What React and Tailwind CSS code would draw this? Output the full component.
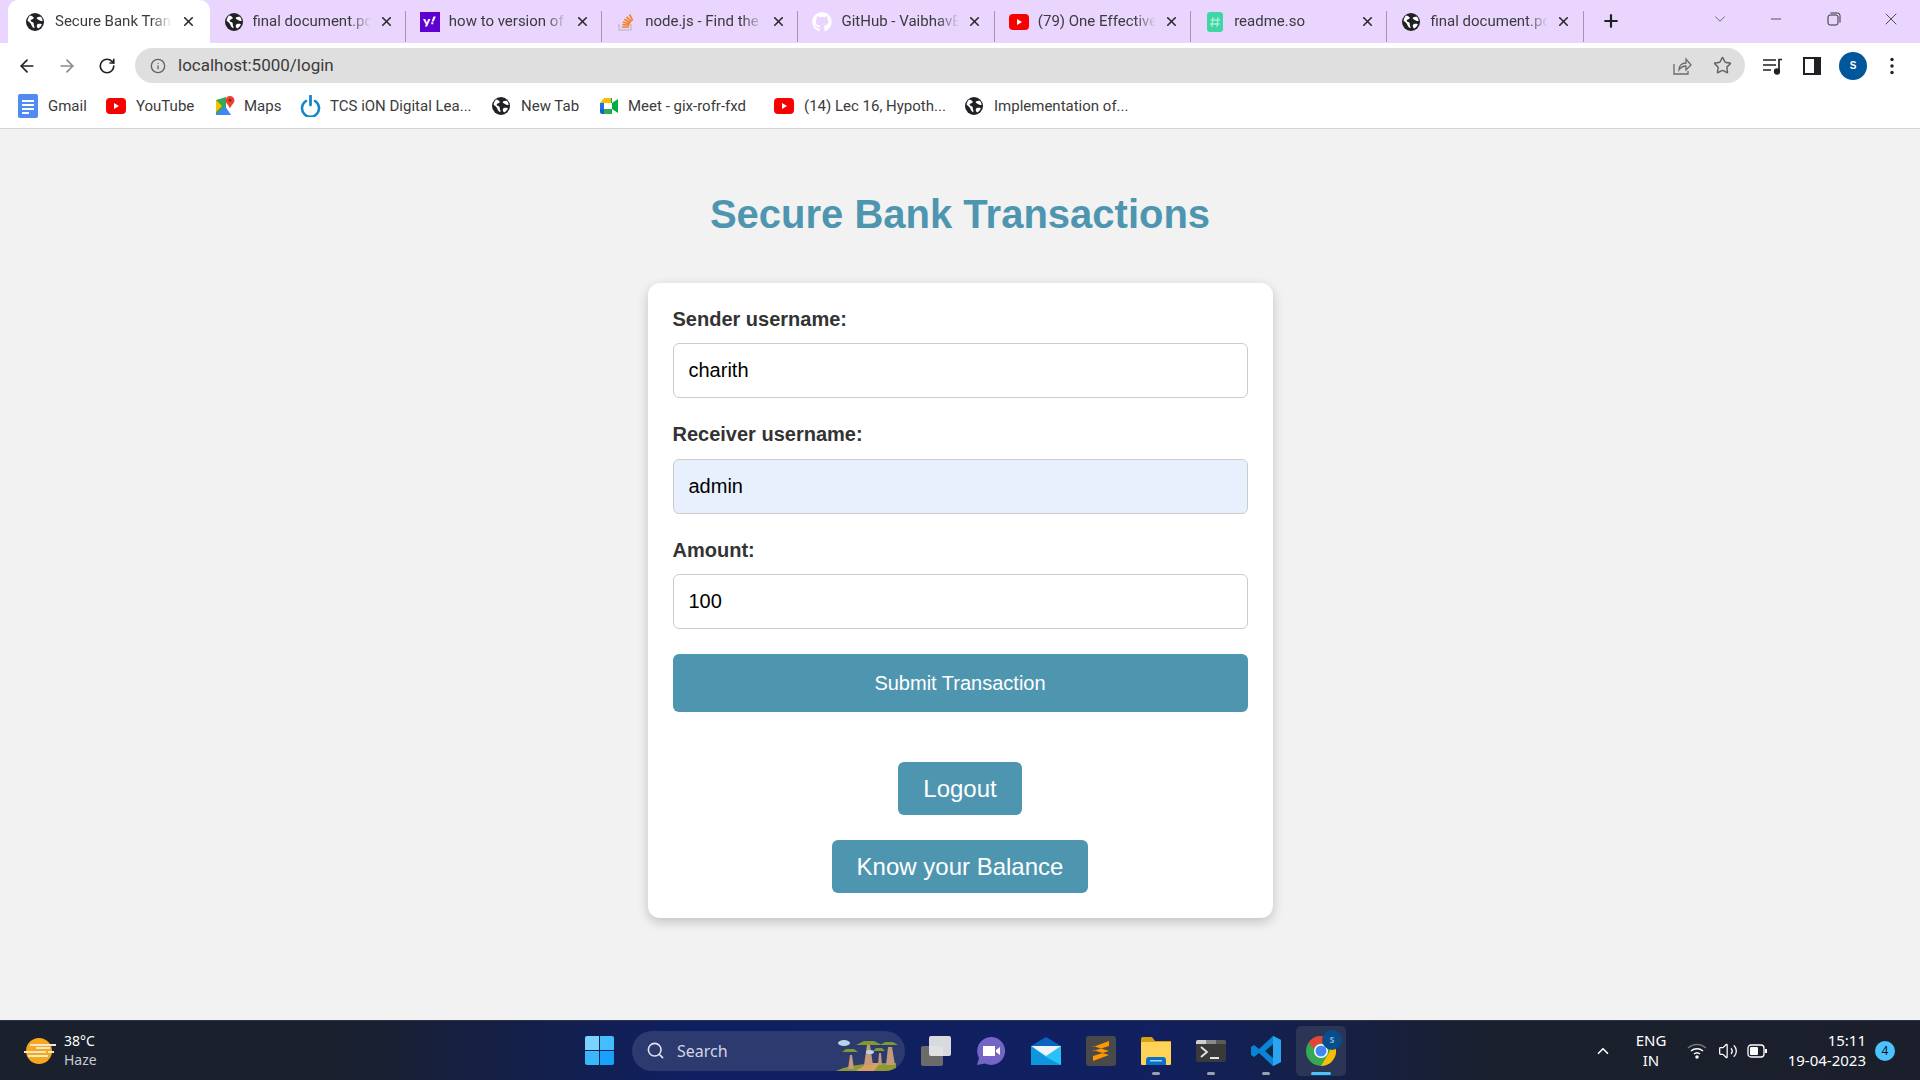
import { ArrowLeft, ArrowRight, RotateCw, Info, Star, X, Plus, ChevronDown, ChevronUp, Minus, Search, Volume2 } from "lucide-react";
import { FaGithub } from "react-icons/fa";

const Globe = ({ size = 18 }) => (
  <svg width={size} height={size} viewBox="0 0 18 18" className="shrink-0">
    <circle cx="9" cy="9" r="9" fill="#202124" />
    <path d="M4 2.6c1.6.3 3 .9 3.6 2 .5 1-.6 1.7-1.7 1.8-1.2.1-1.5 1-1 1.9.5.8 1.8.7 2.5 1.5.6.7.2 1.6.5 2.4.3.9 1 2 .3 3-1.600-.7-2.700-2.400-3.200-4.100C4.500 9.900 2.700 9 1.500 7.600 2 5.500 2.800 3.800 4 2.600z" fill="#fff" />
    <path d="M11 4.500c1.100-.8 2.500-1 3.900-.7 1 1.100 1.600 2.500 1.800 3.900-1.300.5-2.400.3-3.400-.4-.9-.6-1.700-.9-2.400-1.500-.3-.5-.2-1.100.1-1.300zM12 11c1.300-.3 2.600-.2 3.900.2-.6 1.800-2 3.400-3.800 4.300-1-.8-1.500-1.900-1.300-3 .1-.7.500-1.300 1.200-1.500z" fill="#fff" />
  </svg>
);

const YouTube = ({ w = 20, h = 16 }) => (
  <svg width={w} height={h} viewBox="0 0 20 16" className="shrink-0">
    <rect width="20" height="16" rx="4" fill="#f70000" />
    <path d="M8 5l5 3-5 3z" fill="#fff" />
  </svg>
);

const Yahoo = () => (
  <svg width="20" height="20" viewBox="0 0 20 20" className="shrink-0">
    <rect width="20" height="20" fill="#5f01d1" />
    <path d="M3 7h2.200l1.500 3.600L8.300 7h2.100l-3.300 7.500H4.900l.9-2.100zM13.500 4.500h2.300l-2 5h-2.200zM11.300 10.300h2v2h-2z" fill="#fff" />
  </svg>
);

const StackOverflow = () => (
  <svg width="18" height="20" viewBox="0 0 18 20" className="shrink-0">
    <path d="M2 12v6h12v-6" fill="none" stroke="#c7c0cf" strokeWidth="1.600" />
    <path d="M5 15h7M5.300 12.500l7 .8M6 10l6.800 2M7.300 7.300l6.200 3.400M9.500 4.800l5 4.800M12.500 2.500l3.200 6" stroke="#f58025" strokeWidth="1.600" fill="none" />
  </svg>
);

const ReadmeSo = () => (
  <svg width="16" height="20" viewBox="0 0 16 20" className="shrink-0">
    <rect width="16" height="20" rx="3" fill="#3fd6a3" />
    <path d="M6 5l-1 10M11 5l-1 10M3.500 8h9.500M3 12h9.500" stroke="#a5f0d6" strokeWidth="1.300" />
  </svg>
);

const GmailDoc = () => (
  <svg width="20" height="24" viewBox="0 0 20 24" className="shrink-0">
    <rect width="20" height="24" rx="2" fill="#4f8bf5" />
    <path d="M4 7h12M4 11h12M4 15h12M4 19h7" stroke="#fff" strokeWidth="1.800" />
  </svg>
);

const MapsIcon = () => (
  <svg width="20" height="20" viewBox="0 0 20 20" className="shrink-0">
    <path d="M1 4l10-3v18L1 19z" fill="#34a853" />
    <path d="M1 19l9-9 6 9z" fill="#4285f4" />
    <path d="M1 4l6 6-6 6z" fill="#fbbc04" />
    <path d="M15 0c2.500 0 4.500 2 4.500 4.300 0 2.800-3 4.700-4.500 8.200-1.500-3.500-4.500-5.400-4.500-8.200C10.500 2 12.500 0 15 0z" fill="#ea4335" />
    <circle cx="15" cy="4.300" r="1.500" fill="#a51c12" />
  </svg>
);

const TcsIcon = () => (
  <svg width="21" height="22" viewBox="0 0 21 22" fill="none" className="shrink-0">
    <path d="M6 6a8.500 8.500 0 1 0 9 0" stroke="#1487cb" strokeWidth="2.600" strokeLinecap="round" />
    <path d="M10.500 1v9" stroke="#1487cb" strokeWidth="2.800" strokeLinecap="round" />
  </svg>
);

const MeetIcon = () => (
  <svg width="18" height="16" viewBox="0 0 18 16" className="shrink-0">
    <path d="M4 0h8v5H0z" fill="#fbbc04" />
    <path d="M0 5h4v6H0z" fill="#1a73e8" />
    <path d="M0 11h4v5H2a2 2 0 0 1-2-2z" fill="#1a5fd0" />
    <path d="M4 11h8v5H4z" fill="#34a853" />
    <path d="M12 0v16h-1V0zM12 5l6-4v14l-6-4z" fill="#00ac47" />
    <rect x="4" y="5" width="8" height="6" fill="#fff" />
  </svg>
);

const tabs = [
  { icon: <Globe />, title: "final document.pdf" },
  { icon: <Yahoo />, title: "how to version of" },
  { icon: <StackOverflow />, title: "node.js - Find the" },
  { icon: <FaGithub size={20} color="#fff" className="shrink-0" />, title: "GitHub - VaibhavB" },
  { icon: <YouTube />, title: "(79) One Effective" },
  { icon: <ReadmeSo />, title: "readme.so" },
  { icon: <Globe />, title: "final document.pdf" },
];

const bookmarks = [
  { icon: <GmailDoc />, label: "Gmail", cls: "w-[88px] gap-[10px]" },
  { icon: <YouTube />, label: "YouTube", cls: "w-[109px] gap-[10px]" },
  { icon: <MapsIcon />, label: "Maps", cls: "w-[85px] gap-[9px]" },
  { icon: <TcsIcon />, label: "TCS iON Digital Lea...", cls: "w-[192px] gap-[9px]" },
  { icon: <Globe />, label: "New Tab", cls: "w-[108px] gap-[11px]" },
  { icon: <MeetIcon />, label: "Meet - gix-rofr-fxd", cls: "w-[174px] gap-[10px]" },
  { icon: <YouTube />, label: "(14) Lec 16, Hypoth...", cls: "w-[191px] gap-[10px]" },
  { icon: <Globe />, label: "Implementation of...", cls: "gap-[11px]" },
];

const Tab = ({ icon, title }) => (
  <div className="relative flex h-[43px] w-[196.33px] shrink-0 items-center pl-[14px]">
    <span className="flex w-[20px] justify-center">{icon}</span>
    <span className="ml-[9px] w-[118px] overflow-hidden whitespace-nowrap text-[15px] text-[#3b3b3b] [mask-image:linear-gradient(90deg,#000_82%,transparent_100%)]">
      {title}
    </span>
    <X size={15} strokeWidth={2.6} className="ml-[8px] text-[#2a2a2a]" />
    <span className="absolute right-0 top-[11px] h-[31px] w-px bg-[#a394b3]" />
  </div>
);

const TabStrip = () => (
  <div className="flex h-[43px] items-start bg-[#e9d5fd] pl-[8px]">
    <div className="flex h-[43px] w-[201.5px] shrink-0 items-center rounded-t-[10px] bg-white pl-[18px]">
      <Globe />
      <span className="ml-[11px] w-[117px] overflow-hidden whitespace-nowrap text-[15px] text-[#3b3b3b] [mask-image:linear-gradient(90deg,#000_82%,transparent_100%)]">
        Secure Bank Transactions
      </span>
      <X size={15} strokeWidth={2.6} className="ml-[9px] text-[#2a2a2a]" />
    </div>
    {tabs.map((t, i) => (
      <Tab key={i} {...t} />
    ))}
    <Plus size={20} strokeWidth={2.6} className="ml-[17px] mt-[11px] text-[#202124]" />
    <ChevronDown size={18} strokeWidth={1} className="ml-[90px] mt-[10px] text-[#444]" />
    <Minus size={16} strokeWidth={1.200} className="ml-[39px] mt-[11px] text-[#333]" />
    <svg width="14" height="14" viewBox="0 0 14 14" fill="none" stroke="#333" strokeWidth="1" className="ml-[43px] mt-[12px]">
      <rect x="1" y="3" width="10" height="10" rx="2" />
      <path d="M3.500 1h7a2.500 2.500 0 0 1 2.500 2.500v7" />
    </svg>
    <X size={20} strokeWidth={1} className="ml-[40px] mt-[9px] text-[#333]" />
  </div>
);

const Toolbar = () => (
  <div className="flex h-[45px] items-center bg-white pl-[17px]">
    <ArrowLeft size={20} strokeWidth={2} className="text-[#202124]" />
    <ArrowRight size={20} strokeWidth={2} className="ml-[20px] text-[#8a8a8a]" />
    <RotateCw size={18} strokeWidth={2.200} className="ml-[21px] text-[#202124]" />
    <div className="ml-[19px] flex h-[35px] w-[1610px] items-center rounded-full bg-[#dfdfdf] pl-[15px]">
      <Info size={16} strokeWidth={2} className="text-[#5f6368]" />
      <span className="ml-[12px] text-[17px] text-[#3b3b3b]">localhost:5000/login</span>
      <svg width="20" height="20" viewBox="0 0 20 20" fill="none" stroke="#6b6b6b" strokeWidth="1.300" className="ml-auto">
        <path d="M2 8v10h14v-3" />
        <path d="M7 14c0-5 3-7 7-7V3l5 6-5 5v-4c-3 0-5 1-7 4z" />
      </svg>
      <Star size={19} strokeWidth={1.800} className="ml-[21px] mr-[13px] text-[#5f6368]" />
    </div>
    <svg width="20" height="18" viewBox="0 0 20 18" fill="none" stroke="#202124" strokeWidth="1.700" className="ml-[18px]">
      <path d="M0 3h13M0 8h13M0 13h8" />
      <path d="M16 14V2.500h3" />
      <circle cx="14" cy="14.500" r="2.300" fill="#202124" />
    </svg>
    <svg width="18" height="18" viewBox="0 0 18 18" className="ml-[20px]">
      <rect width="18" height="18" fill="#202124" />
      <rect x="2" y="2" width="9" height="14" fill="#fff" />
    </svg>
    <div className="ml-[18px] flex h-[28px] w-[28px] items-center justify-center rounded-full bg-[#01579b] text-[10px] font-bold text-white [font-family:'Liberation_Sans',sans-serif]">
      S
    </div>
    <svg width="4" height="18" viewBox="0 0 4 18" fill="#202124" className="ml-[23px]">
      <circle cx="2" cy="2.500" r="1.700" />
      <circle cx="2" cy="9" r="1.700" />
      <circle cx="2" cy="15.500" r="1.700" />
    </svg>
  </div>
);

const Bookmarks = () => (
  <div className="flex h-[41px] items-center border-b border-[#d4d4d4] bg-white pb-[4px] pl-[18px] text-[15px] text-[#3b3b3b]">
    {bookmarks.map((b, i) => (
      <div key={i} className={`flex items-center whitespace-nowrap ${b.cls}`}>
        {b.icon}
        <span>{b.label}</span>
      </div>
    ))}
  </div>
);

const Field = ({ label, value, cls = "", labelCls = "mb-[12px]" }) => (
  <div className="mb-[25px]">
    <label className={`block h-[23px] text-[20px] font-bold leading-[23px] text-[#333] ${labelCls}`}>{label}</label>
    <input
      readOnly
      value={value}
      className={`block h-[55px] w-full rounded-[6px] border border-[#ccc] px-[15px] text-[20px] text-black outline-none ${cls}`}
    />
  </div>
);

const LoginCard = () => (
  <main className="flex flex-1 flex-col items-center bg-[#f2f2f2] [font-family:'Liberation_Sans',Arial,sans-serif]">
    <h1 className="mb-[46px] mt-[62px] text-[40px] font-bold leading-[46px] text-[#4e96b0]">Secure Bank Transactions</h1>
    <div className="flex w-[625px] flex-col rounded-[12px] bg-white p-[25px] shadow-[0_4px_12px_rgba(0,0,0,0.2)]">
      <Field label="Sender username:" value="charith" />
      <Field label="Receiver username:" value="admin" cls="bg-[#e8f0fe]" labelCls="mb-[13px]" />
      <Field label="Amount:" value="100" />
      <button className="h-[58px] w-full rounded-[6px] bg-[#4e96b0] text-[20px] text-white">Submit Transaction</button>
      <div className="mt-[50px] flex flex-col items-center gap-[25px]">
        <button className="h-[53px] rounded-[6px] bg-[#4e96b0] px-[25px] text-[24px] text-white">Logout</button>
        <button className="h-[53px] rounded-[6px] bg-[#4e96b0] px-[25px] text-[24px] text-white">Know your Balance</button>
      </div>
    </div>
  </main>
);

const Taskbar = () => (
  <footer className="flex h-[60px] items-center border-t border-[#2f3444] bg-[linear-gradient(90deg,#1a202c_0%,#1a202e_18%,#0f1f62_36%,#11205f_60%,#1a202c_78%,#1a1f2b_100%)] [font-family:'Noto_Sans',sans-serif] text-white">
    {/* weather */}
    <svg width="32" height="28" viewBox="0 0 32 28" className="ml-[24px] shrink-0">
      <circle cx="15" cy="14" r="13" fill="#f5a81c" />
      <path d="M6 8h26M12 11h14M0 15h22M24 15h6M4 19h20" stroke="#f3e6cc" strokeWidth="1.800" />
    </svg>
    <div className="ml-[8px] flex w-[60px] flex-col pb-[2px] text-[14px] leading-[19px]">
      <span>38°C</span>
      <span className="text-[#c7cad1]">Haze</span>
    </div>
    {/* start + search */}
    <div className="ml-[461px] grid h-[29px] w-[29px] shrink-0 grid-cols-2 gap-[1px]">
      <span className="rounded-tl-[2px] bg-[#79d3fc]" />
      <span className="rounded-tr-[2px] bg-[#45bdfc]" />
      <span className="rounded-bl-[2px] bg-[#3bb6fb]" />
      <span className="rounded-br-[2px] bg-[#16a2fa]" />
    </div>
    <div className="relative ml-[18px] flex h-[40px] w-[273px] shrink-0 items-center overflow-hidden rounded-full bg-[#2c3a70] pl-[14px]">
      <Search size={19} strokeWidth={2} className="text-[#e4e6ee]" />
      <span className="ml-[12px] text-[16px] text-[#d3d6e2]">Search</span>
      <svg width="62" height="34" viewBox="0 0 62 34" className="absolute right-[7px] top-[6px]">
        <path d="M0 34c12-6 30-8 60-8v8z" fill="#8d9a34" />
        <path d="M20 34l12-8h12l-6 8z" fill="#d9a066" />
        <path d="M12 32l2-14h2l2 14zM28 28l3-20h3l3 20zM50 28l2-18h4l3 18zM42 28l1-12h2l1 12z" fill="#c49a78" />
        <path d="M6 15h16l-4-3h-8zM20 8h26l-8-4h-10zM44 8h18l-5-3h-8zM37 14h12l-3-3h-6z" fill="#7c9a2e" />
        <ellipse cx="8" cy="6" rx="6" ry="3" fill="#b8d4ea" />
        <ellipse cx="34" cy="15" rx="4" ry="2" fill="#b8d4ea" />
      </svg>
    </div>
    {/* task view */}
    <div className="relative ml-[16px] h-[30px] w-[30px] shrink-0">
      <span className="absolute bottom-0 left-0 h-[20px] w-[22px] rounded-[2px] bg-[#6b6b6b]" />
      <span className="absolute right-0 top-0 h-[20px] w-[22px] rounded-[2px] bg-[#eeeeee]/90" />
    </div>
    {/* chat */}
    <svg width="30" height="30" viewBox="0 0 30 30" className="ml-[25px] shrink-0">
      <path d="M15 1a14 14 0 1 1-6 26.600L1 29l2-7A14 14 0 0 1 15 1z" fill="#7465c7" />
      <path d="M7 10h12v10H7zM20 14l4-3v8l-4-3z" fill="#fff" />
    </svg>
    {/* mail */}
    <svg width="30" height="28" viewBox="0 0 30 28" className="ml-[25px] shrink-0">
      <path d="M15 0l15 9v1H0V9z" fill="#0864c0" />
      <rect y="9" width="30" height="19" fill="#28c2f6" />
      <path d="M0 9l15 10L30 9z" fill="#eef3f7" />
      <path d="M0 28V9l15 11 15 8z" fill="#0e96dc" />
    </svg>
    {/* sublime */}
    <div className="ml-[25px] flex h-[30px] w-[30px] shrink-0 items-center justify-center rounded-[3px] bg-[#4a4a4a]">
      <svg width="16" height="20" viewBox="0 0 16 20" fill="#ff9800">
        <path d="M16 0v5L0 10V6zM0 9l16 5v-4L0 5zM16 10v4L0 20v-5z" />
      </svg>
    </div>
    {/* explorer */}
    <div className="relative ml-[25px] shrink-0">
      <svg width="30" height="28" viewBox="0 0 30 28" className="block">
        <path d="M0 2a2 2 0 0 1 2-2h9l3 4h16v8H0z" fill="#d8a014" />
        <rect y="5" width="30" height="23" rx="1" fill="#ffd358" />
        <path d="M5 28v-5a3 3 0 0 1 3-3h14a3 3 0 0 1 3 3v5z" fill="#0a71c8" />
        <rect x="9" y="23" width="12" height="1.500" fill="#9fd3f8" />
      </svg>
      <span className="absolute left-[11px] top-[35px] h-[3px] w-[8px] rounded-full bg-[#9aa0b0]" />
    </div>
    {/* terminal */}
    <div className="relative ml-[25px] shrink-0">
      <div className="flex h-[22px] w-[30px] flex-col overflow-hidden rounded-[2px] bg-[#3a3a3a]">
        <div className="flex h-[4px]">
          <span className="w-[10px] bg-[#d0d0d0]" />
          <span className="w-[10px] bg-[#8a8a8a]" />
          <span className="w-[10px] bg-[#5a5a5a]" />
        </div>
        <svg width="30" height="18" viewBox="0 0 30 18" fill="none" stroke="#e6e6e6" strokeWidth="1.800">
          <path d="M5 3l6 5-6 5M14 14h9" />
        </svg>
      </div>
      <span className="absolute left-[11px] top-[32px] h-[3px] w-[8px] rounded-full bg-[#9aa0b0]" />
    </div>
    {/* vscode */}
    <div className="relative ml-[25px] shrink-0">
      <svg width="30" height="30" viewBox="0 0 30 30" className="block">
        <path d="M22 0l8 4v22l-8 4-14-13-5 4-3-2v-8l3-2 5 4z" fill="#0a84d6" />
        <path d="M22 0l8 4v22l-8 4z" fill="#2aa6ee" />
        <path d="M22 8l-8 7 8 7z" fill="#0b2a4a" />
      </svg>
      <span className="absolute left-[11px] top-[36px] h-[3px] w-[8px] rounded-full bg-[#9aa0b0]" />
    </div>
    {/* chrome */}
    <div className="relative ml-[15px] flex h-[50px] w-[50px] shrink-0 items-center justify-center rounded-[5px] bg-[#2b3556]">
      <svg width="30" height="30" viewBox="0 0 30 30">
        <circle cx="15" cy="15" r="15" fill="#34a853" />
        <path d="M15 0a15 15 0 0 1 13 7.500H15a7.500 7.500 0 0 0-7 5L2.500 7A15 15 0 0 1 15 0z" fill="#ea4335" />
        <path d="M28 7.500A15 15 0 0 1 15 30l6.500-11A7.500 7.500 0 0 0 21 7.500z" fill="#fbbc04" />
        <circle cx="15" cy="15" r="7" fill="#fff" />
        <circle cx="15" cy="15" r="5.500" fill="#4285f4" />
      </svg>
      <span className="absolute right-[4px] top-[4px] flex h-[20px] w-[20px] items-center justify-center rounded-full bg-[#0a4d8c] text-[9px] font-bold text-[#7fb4e0]">
        S
      </span>
      <span className="absolute bottom-[1px] left-[15px] h-[3px] w-[20px] rounded-full bg-[#4cc2ff]" />
    </div>
    {/* tray */}
    <ChevronUp size={18} strokeWidth={2.200} className="ml-[248px] text-white" />
    <div className="ml-[20px] flex w-[38px] flex-col items-center pb-[2px] text-[15px] leading-[20px]">
      <span>ENG</span>
      <span>IN</span>
    </div>
    <svg width="20" height="16" viewBox="0 0 20 16" fill="none" stroke="#fff" strokeWidth="1.500" className="ml-[17px]">
      <path d="M1 5a13 13 0 0 1 18 0" stroke="#777" />
      <path d="M4 8a9 9 0 0 1 12 0M7 11a4.500 4.500 0 0 1 6 0" />
      <circle cx="10" cy="14" r="1" fill="#fff" />
    </svg>
    <Volume2 size={20} strokeWidth={1.500} className="ml-[11px] text-white" />
    <svg width="20" height="14" viewBox="0 0 20 14" fill="none" className="ml-[9px]">
      <rect x="1" y="1" width="16" height="12" rx="3" stroke="#fff" strokeWidth="1.300" />
      <rect x="3" y="3" width="8" height="8" rx="1" fill="#fff" />
      <rect x="18" y="5" width="2" height="4" fill="#fff" />
    </svg>
    <div className="ml-[2px] flex w-[97px] flex-col items-end pb-[2px] text-[15px] leading-[20px]">
      <span>15:11</span>
      <span>19-04-2023</span>
    </div>
    <span className="ml-[9px] flex h-[20px] w-[20px] items-center justify-center rounded-full bg-[#4cc2ff] text-[12px] text-[#10141f]">4</span>
  </footer>
);

const App = () => (
  <div className="flex h-screen w-full flex-col overflow-hidden bg-white [font-family:Roboto,sans-serif]">
    <TabStrip />
    <Toolbar />
    <Bookmarks />
    <LoginCard />
    <Taskbar />
  </div>
);

export default App;
